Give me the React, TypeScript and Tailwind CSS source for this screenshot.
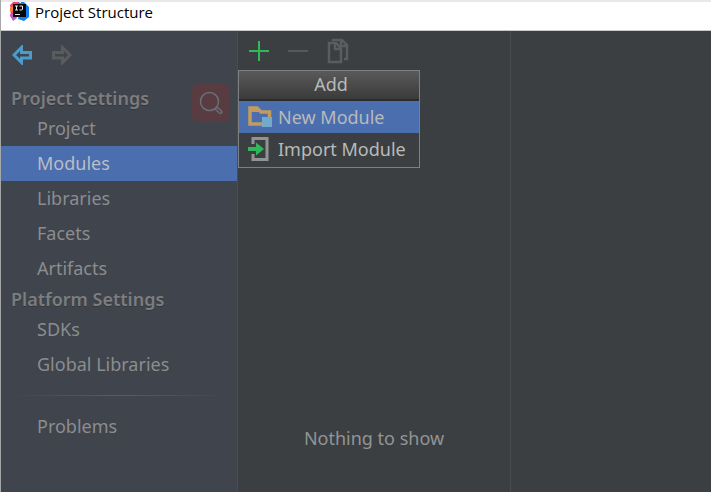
import React from "react";

function AppLogo() {
  return (
    <svg width="20" height="20" viewBox="0 0 20 20" aria-hidden="true">
      <path d="M1 3 4 0h6L8 9l-4 9-3-4 1-5z" fill="#fb3f6b" />
      <path d="m1 13 4-3 3 6-4 3z" fill="#b45bd0" />
      <path d="m1 6 3-2v5l-3 1z" fill="#fb7a3c" />
      <path d="M12 0h3l5 5v10l-5 4-6-2z" fill="#147df5" />
      <path d="m9 0 5 2v3H8z" fill="#8a4fe0" />
      <rect x="4" y="2" width="13" height="13" fill="#080808" />
      <path d="M6 4h3M7.500 4v4M6 8h3M10.500 4h3v3q0 1-1 1h-2M6 12.500h5" stroke="#e8e8e8" strokeWidth="1" fill="none" />
    </svg>
  );
}

function Arrow({ color, flip }: { color: string; flip?: boolean }) {
  return (
    <svg width="20" height="20" viewBox="0 0 20 20" className={flip ? "-scale-x-100" : ""} aria-hidden="true">
      <path d="M2 10 9.500 2.500V7.500H18.500v5.500H9.500V17.500z" fill="none" stroke={color} strokeWidth="3" />
    </svg>
  );
}

function CopyIcon() {
  return (
    <svg width="22" height="26" viewBox="0 0 22 26" fill="none" stroke="#5a5c5d" strokeWidth="2.500" aria-hidden="true">
      <path d="M6 3V2h9l5 5v14h-3M14 2v6h6" />
      <path d="M2 5h7l5 5v14H2zM8 5v6h6" />
    </svg>
  );
}

function FolderIcon() {
  return (
    <svg width="24" height="22" viewBox="0 0 24 22" aria-hidden="true">
      <path d="M2 18V2h7l4 4h8.500v12z" fill="none" stroke="#c49a5e" strokeWidth="3.500" />
      <path d="M1 1h9l3 5H1z" fill="#c49a5e" />
      <rect x="14" y="11" width="10" height="10" fill="#73a9ca" />
    </svg>
  );
}

function ImportIcon() {
  return (
    <svg width="24" height="24" viewBox="0 0 24 24" aria-hidden="true">
      <path d="M5 7V1.500h14v21H5V17" fill="none" stroke="#919394" strokeWidth="3" />
      <path d="M0 10h8V5.500l8 6.500-8 6.500V14H0z" fill="#30b85a" />
    </svg>
  );
}

function NavGroup({ title, items }: { title: string; items: string[] }) {
  return (
    <section>
      <h2 className="h-[26px] pl-[10px] text-[18px] leading-[26px] font-semibold text-[#7b7d7f] [text-shadow:0_1px_0_#34373c]">{title}</h2>
      <ul>
        {items.map((item) => (
          <NavItem key={item} label={item} active={item === "Modules"} />
        ))}
      </ul>
    </section>
  );
}

function NavItem({ label, active }: { label: string; active?: boolean }) {
  return (
    <li>
      <button
        className={`block h-[35px] w-full pl-9 text-left text-[18px] leading-[35px] ${active ? "bg-[#4b6eaf] text-[#b9bdc4]" : "text-[#8b8d8f]"}`}
      >
        {label}
      </button>
    </li>
  );
}

export default function App() {
  return (
    <div className="flex min-h-screen flex-col border-l border-[#a6a8a8] bg-[#3c3f41] font-['Noto_Sans',sans-serif]">
      <header className="flex h-[31px] items-start gap-[6px] border-t-2 border-b border-t-[#e8e8e8] border-b-[#c5c9c9] bg-white pl-2">
        <AppLogo />
        <h1 className="font-['Open_Sans',sans-serif] text-[15px] leading-5 text-black">Project Structure</h1>
      </header>
      <main className="flex flex-1">
        <aside className="relative w-[237px] shrink-0 border-r border-[#4b4c4d] bg-[#40444c]">
          <div className="flex h-[54px] items-center gap-5 pb-[6px] pl-[11px]">
            <button aria-label="Back"><Arrow color="#4a9ccc" /></button>
            <button aria-label="Forward" disabled><Arrow color="#5a5b5d" flip /></button>
          </div>
          <button aria-label="Search" className="absolute top-[53px] right-[7px] flex size-[38px] items-center justify-center rounded-md bg-[#593b42]">
            <svg width="24" height="24" viewBox="0 0 24 24" fill="none" stroke="#6a6e76" strokeWidth="1.500" aria-hidden="true">
              <circle cx="10.500" cy="10.500" r="9" />
              <path d="m16 18 2-2 4.500 4q1 1 0 2t-2 0z" />
            </svg>
          </button>
          <nav>
            <NavGroup title="Project Settings" items={["Project", "Modules", "Libraries", "Facets", "Artifacts"]} />
            <NavGroup title="Platform Settings" items={["SDKs", "Global Libraries"]} />
            <hr className="mx-2 my-[13px] h-px border-0 bg-linear-to-r from-transparent via-[#5c5d5e] to-transparent" />
            <ul>
              <NavItem label="Problems" />
            </ul>
          </nav>
        </aside>
        <section className="relative w-[273px] shrink-0 border-r border-[#4b4c4d]">
          <div className="flex h-10 items-center gap-[19px] pl-[11px]">
            <button aria-label="Add">
              <svg width="20" height="20" viewBox="0 0 20 20" aria-hidden="true"><path d="M0 10h20M10 0v20" stroke="#30b85a" strokeWidth="2" /></svg>
            </button>
            <button aria-label="Remove" disabled>
              <svg width="20" height="20" viewBox="0 0 20 20" aria-hidden="true"><path d="M0 10h20" stroke="#565859" strokeWidth="2" /></svg>
            </button>
            <button aria-label="Copy" disabled><CopyIcon /></button>
          </div>
          <p className="pt-[353px] text-center text-[18px] leading-7 text-[#929496]">Nothing to show</p>
          <div role="menu" aria-label="Add" className="absolute top-[39px] left-0 w-[182px] border border-[#7d7f80] bg-[#3c3f41] text-[18px] text-[#b8babb]">
            <div className="h-[30px] border-b-2 border-[#2b2c2d] bg-linear-to-b from-[#5a5a5a] to-[#3b3b3b] pl-1 text-center leading-[26px]">Add</div>
            <button role="menuitem" className="flex h-8 w-full items-center gap-[6px] bg-[#4b6eaf] pl-[9px]"><FolderIcon />New Module</button>
            <button role="menuitem" className="flex h-[34px] w-full items-center gap-[6px] pb-[2px] pl-[9px]"><ImportIcon />Import Module</button>
          </div>
        </section>
        <section className="flex-1" />
      </main>
    </div>
  );
}
